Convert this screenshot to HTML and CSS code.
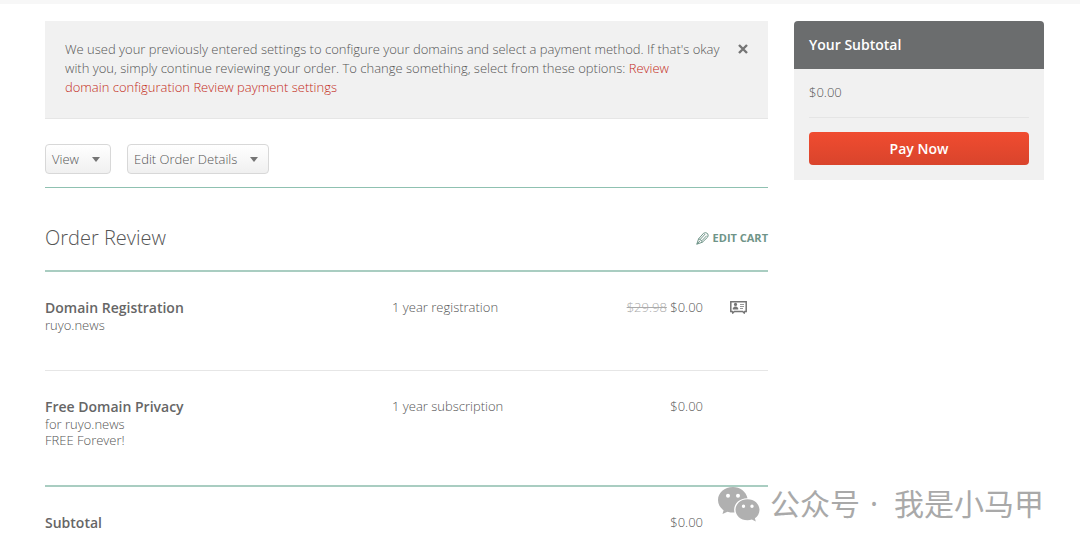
FILE: index.html
```
<!DOCTYPE html>
<html lang="en">
<head>
    <meta charset="UTF-8">
    <meta name="viewport" content="width=device-width, initial-scale=1.0">
    <title>Order Review</title>
    <link rel="stylesheet" href="styles.css">
</head>
<body>
    <div class="topbar"></div>
    <div class="page">
        <main class="main">
            <div class="notice">
                <p>We used your previously entered settings to configure your domains and select a payment method. If that's okay with you, simply continue reviewing your order. To change something, select from these options: <a href="#domains">Review domain&nbsp;configuration</a> <a href="#payment">Review payment settings</a></p>
                <button class="close" aria-label="Close">
                    <svg width="10" height="10" viewBox="0 0 10 10"><path d="M1 1l8 8M9 1l-8 8" stroke="#757575" stroke-width="2.4"/></svg>
                </button>
            </div>

            <div class="toolbar">
                <button class="dropdown">View</button>
                <button class="dropdown">Edit Order Details</button>
            </div>

            <div class="review-head">
                <h1>Order Review</h1>
                <a class="edit-cart" href="#cart">
                    <svg width="13" height="13" viewBox="0 0 13 13" fill="none" stroke="#6f9488" stroke-width="1"><path d="M.8 12.2L2.6 6.8 7.6 1.2Q10 0 11.6 1.6 12.8 3.4 11.6 5.2L6.4 10.2z"/><path d="M2.6 6.8Q5 7 6.4 10.2M4.4 7.2L9.2 2M5.8 8.8L10.8 3.6M.8 12.2L4.2 8.6"/></svg>
                    EDIT CART
                </a>
            </div>

            <table class="order">
                <tbody>
                    <tr>
                        <td class="item"><b>Domain Registration</b><br>ruyo.news</td>
                        <td>1 year registration</td>
                        <td class="price"><del>$29.98</del> $0.00</td>
                        <td class="icon">
                            <svg width="17" height="13" viewBox="0 0 17 13"><path d="M.8 .8h15.400v9.700h-1.400l-.6 1.500-1.500-1.500H4.300l-1.500 1.500-.6-1.500H.8z" fill="none" stroke="#757575" stroke-width="1.500"/><circle cx="5.500" cy="3.400" r="1.600" fill="#757575"/><path d="M2.800 8.600V7l1.800-1.600h1.800L8.200 7v1.600z" fill="#757575"/><path d="M10 3.500h4M10 5.500h4M10 7.500h3" stroke="#999"/></svg>
                        </td>
                    </tr>
                    <tr>
                        <td class="item"><b>Free Domain Privacy</b><br>for ruyo.news<br>FREE Forever!</td>
                        <td>1 year subscription</td>
                        <td class="price">$0.00</td>
                        <td></td>
                    </tr>
                </tbody>
                <tfoot>
                    <tr>
                        <td class="item"><b>Subtotal</b></td>
                        <td></td>
                        <td class="price">$0.00</td>
                        <td></td>
                    </tr>
                </tfoot>
            </table>
        </main>

        <aside class="summary">
            <h2>Your Subtotal</h2>
            <div class="summary-body">
                <p>$0.00</p>
                <button class="pay">Pay Now</button>
            </div>
        </aside>
    </div>

    <div class="watermark" lang="zh">
        <svg width="42" height="36" viewBox="0 0 42 36"><path fill="#b0b0b0" fill-rule="evenodd" d="M15 1C6.500 1 0 6.800 0 14c0 4.200 2.200 7.800 5.600 10.200L4.500 28l5-2.300c2 .7 4.600 1 7 .9-2-8 4.500-14.600 13-14.400C28 5.500 22 1 15 1zM10 7.800a2 2 0 1 0 0 4 2 2 0 0 0 0-4zm10 0a2 2 0 1 0 0 4 2 2 0 0 0 0-4z"/><path fill="#b0b0b0" fill-rule="evenodd" d="M29.500 13.200c-6.900 0-12 4.800-12 10.500s5.100 10.500 12 10.500c1.600 0 3-.2 4.400-.6l3.900 2-.9-3.300c2.800-2 4.600-5 4.600-8.600 0-5.700-5.100-10.500-12-10.500zM25.500 18.500a1.700 1.700 0 1 0 0 3.400 1.700 1.700 0 0 0 0-3.400zm8.500 0a1.700 1.700 0 1 0 0 3.400 1.700 1.700 0 0 0 0-3.400z"/></svg>
        <span>公众号</span>
        <span>·</span>
        <span class="account">我是小马甲</span>
    </div>
</body>
</html>
```
FILE: styles.css
```
* { box-sizing: border-box; }
body { margin: 0; background: #fff; color: #555; font-family: "Open Sans", "Noto Sans CJK SC", sans-serif; font-size: 13px; font-weight: 300; line-height: 16px; }
h1, h2, p { margin: 0; font-weight: 300; }
a { color: #c42c1a; text-decoration: none; }
button { font-family: inherit; font-weight: 300; cursor: pointer; }

.topbar { height: 4px; background: #f7f7f7; }
.page { display: flex; align-items: flex-start; gap: 26px; padding: 17px 36px 0 45px; }
.main { flex: 1; }

.notice { display: flex; justify-content: space-between; align-items: flex-start; padding: 19px 20px; border-bottom: 1px solid #e6e6e6; background: #f1f1f1; line-height: 19px; min-height: 98px; }
.notice p { flex: 1; }
.close { display: flex; padding: 4px 0 0; margin-left: 8px; border: none; background: none; }

.toolbar { display: flex; gap: 16px; padding: 25px 0 13px; border-bottom: 1px solid #8fc1b1; }
.dropdown { display: flex; align-items: center; gap: 13px; height: 30px; padding: 0 10px 0 6px; border: 1px solid #d8d8d8; border-radius: 4px; background: linear-gradient(#fff, #f0f0f0); color: #555; font-size: 13px; }
.dropdown::after { content: ""; border: 4px solid transparent; border-top: 5px solid #757575; border-bottom: none; }

.review-head { display: flex; justify-content: space-between; align-items: center; height: 84px; padding-top: 18px; border-bottom: 2px solid #a9cdc1; }
.review-head h1 { font-size: 20px; line-height: 28px; }
.edit-cart { display: flex; align-items: center; gap: 4px; color: #6f9488; font-size: 11px; font-weight: bold; }

.order { width: 100%; border-collapse: collapse; }
.order td { padding: 27px 0 37px; vertical-align: top; }
.order b { color: #666; font-size: 14px; font-weight: 600; line-height: 18px; }
.order tbody tr + tr td { border-top: 1px solid #e6e6e6; }
.order tfoot td { padding-bottom: 8px; border-top: 2px solid #a9cdc1; }
.item { width: 48%; }
.price { text-align: right; }
.price del { color: #aaa; }
.order td:last-child { width: 65px; padding-left: 27px; }
.icon svg { display: block; margin-top: 2px; }

.summary { width: 250px; border-radius: 4px 4px 0 0; background: #f1f1f1; overflow: hidden; }
.summary h2 { padding: 15px; background: #6b6d6e; color: #fff; font-size: 14px; font-weight: 600; line-height: 18px; }
.summary-body { padding: 15px; }
.summary-body p { padding-bottom: 17px; margin-bottom: 14px; border-bottom: 1px solid #e5e5e5; }
.pay { display: block; width: 100%; height: 33px; border: none; border-radius: 4px; background: linear-gradient(#f04c30, #d9442c); color: #fff; font-size: 14px; font-weight: 600; }

.watermark { position: absolute; right: 36px; bottom: 26px; display: flex; align-items: center; gap: 10px; color: #a9a9a9; font-family: "Noto Sans", "Noto Sans CJK SC", sans-serif; font-size: 30px; font-weight: normal; line-height: 36px; }
.account { margin-left: 6px; }
```
